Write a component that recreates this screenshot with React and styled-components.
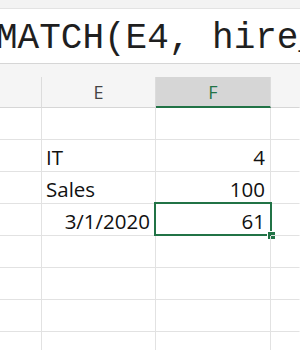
import React from "react";
import styled, { createGlobalStyle } from "styled-components";

const Global = createGlobalStyle`
  html, body { margin: 0; padding: 0; background: #ffffff; overflow: hidden; }
  #root { width: 300px; height: 350px; overflow: hidden; }
`;

const Page = styled.div`
  width: 300px;
  height: 350px;
  display: flex;
  flex-direction: column;
  overflow: hidden;
  background: #fff;
`;

const TopStrip = styled.div`
  height: 8px;
  background: #f3f3f3;
  border-bottom: 1px solid #e3e3e3;
  flex-shrink: 0;
`;

const FormulaBar = styled.div`
  height: 54px;
  background: #fff;
  border-bottom: 1px solid #d6d6d6;
  display: flex;
  align-items: center;
  overflow: hidden;
  flex-shrink: 0;
`;

const FormulaText = styled.div`
  font-family: "Liberation Mono", "DejaVu Sans Mono", monospace;
  font-size: 36px;
  color: #1f1f1f;
  white-space: pre;
  margin-left: -4px;
  line-height: 1;
  padding-top: 5px;
`;

const Band = styled.div`
  height: 13px;
  background: #f5f5f5;
  flex-shrink: 0;
`;

const Row = styled.div`
  display: grid;
  grid-template-columns: 42px 114px 115px 1fr;
  height: ${(p) => p.$h}px;
  flex-shrink: 0;
`;

const HeaderCell = styled.div`
  box-sizing: border-box;
  background: ${(p) => (p.$active ? "#d6d6d6" : "#f5f5f5")};
  border-right: 1px solid ${(p) => (p.$last ? "transparent" : "#dcdcdc")};
  border-bottom: ${(p) => (p.$active ? "2px solid #217346" : "1px solid #d6d6d6")};
  color: ${(p) => (p.$active ? "#217346" : "#444")};
  font-family: "Open Sans", "Noto Sans", sans-serif;
  font-size: 18px;
  display: flex;
  align-items: center;
  justify-content: center;
  padding-top: ${(p) => (p.$active ? 1 : 0)}px;
`;

const Cell = styled.div`
  position: relative;
  box-sizing: border-box;
  border-right: 1px solid ${(p) => (p.$last ? "transparent" : "#e2e2e2")};
  border-bottom: 1px solid #e2e2e2;
  font-family: "Open Sans", "Noto Sans", sans-serif;
  font-size: 20.5px;
  color: #111;
  display: flex;
  align-items: flex-end;
  justify-content: ${(p) => (p.$right ? "flex-end" : "flex-start")};
  padding: 0 5px 0 4px;
  line-height: 28px;
  white-space: nowrap;
`;

const Selection = styled.div`
  position: absolute;
  left: -2px;
  top: -2px;
  right: -2px;
  bottom: -1px;
  border: 2px solid #217346;
  pointer-events: none;
`;

const Handle = styled.div`
  position: absolute;
  right: -6px;
  bottom: -6px;
  width: 7px;
  height: 7px;
  background: #217346;
  border: 1px solid #fff;
`;

const rows = [
  ["", "", ""],
  ["", "IT", "4"],
  ["", "Sales", "100"],
  ["", "3/1/2020", "61"],
  ["", "", ""],
  ["", "", ""],
  ["", "", ""],
  ["", "", ""],
];

export default function App() {
  return (
    <Page>
      <Global />
      <TopStrip />
      <FormulaBar>
        <FormulaText>MATCH(E4, hire_</FormulaText>
      </FormulaBar>
      <Band />
      <Row $h={31}>
        <HeaderCell />
        <HeaderCell>E</HeaderCell>
        <HeaderCell $active>F</HeaderCell>
        <HeaderCell $last />
      </Row>
      {rows.map((r, i) => (
        <Row key={i} $h={32}>
          <Cell>{r[0]}</Cell>
          <Cell $right={r[1] === "3/1/2020"}>{r[1]}</Cell>
          <Cell $right>
            {r[2]}
            {i === 3 && (
              <Selection>
                <Handle />
              </Selection>
            )}
          </Cell>
          <Cell $last />
        </Row>
      ))}
    </Page>
  );
}
